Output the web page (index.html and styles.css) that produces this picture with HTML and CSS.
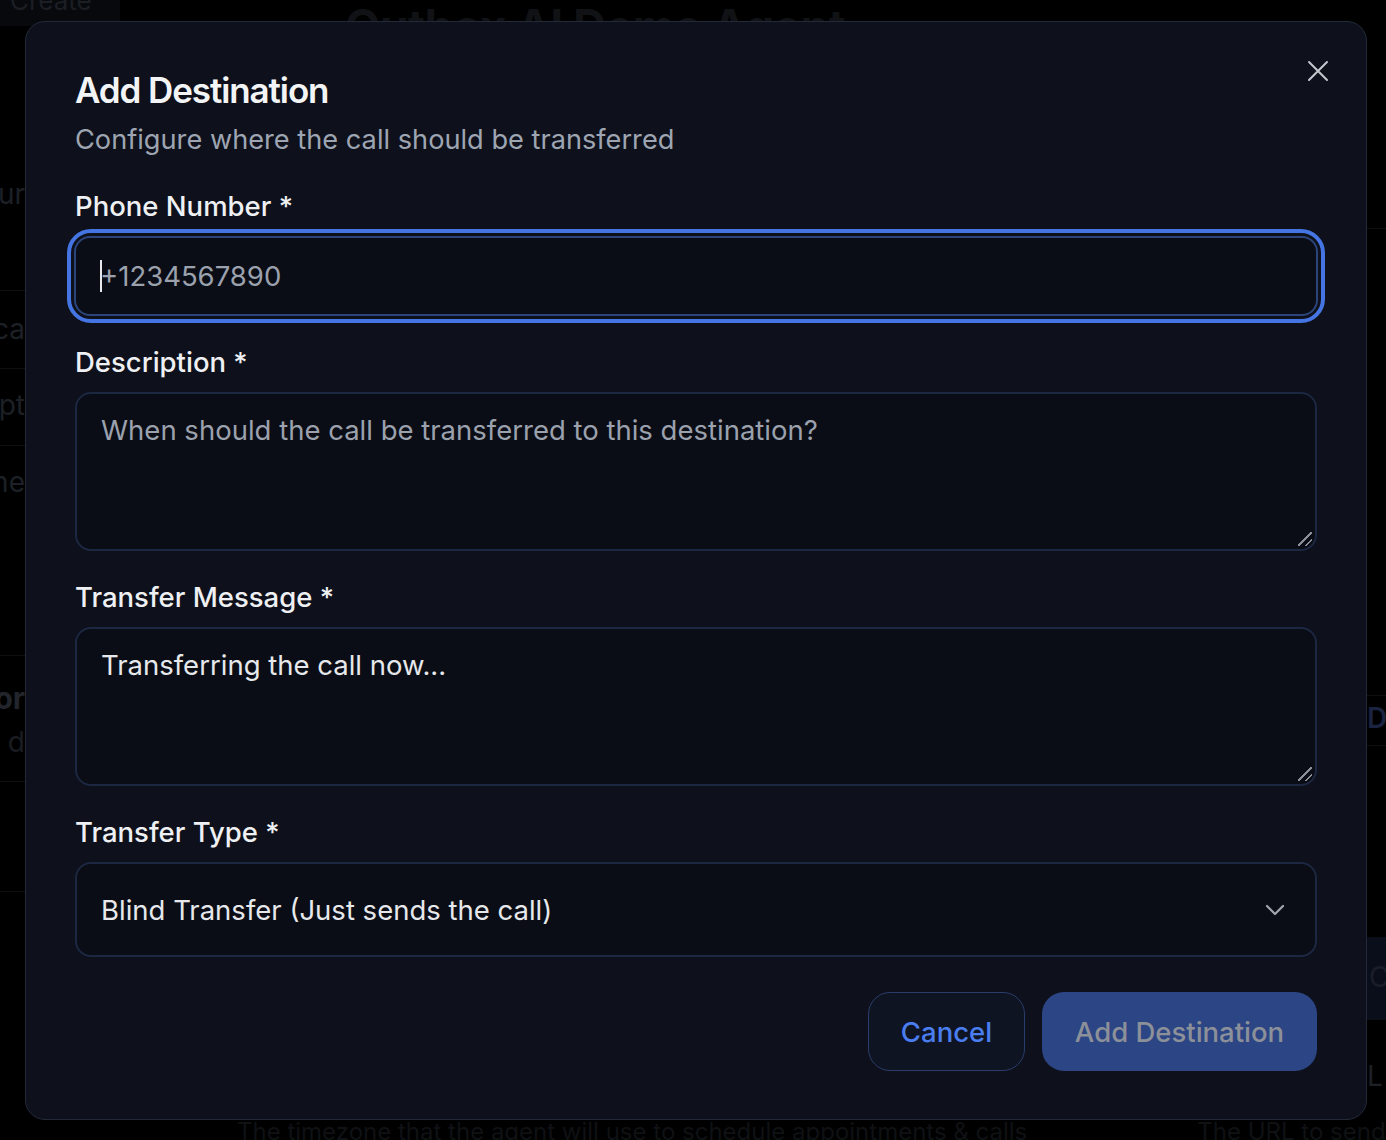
FILE: index.html
```html
<!DOCTYPE html>
<html lang="en">
<head>
<meta charset="utf-8">
<title>Add Destination</title>
<link rel="stylesheet" href="styles.css">
</head>
<body>
<div class="page">
  <header class="page-top">
    <div class="page-create">Create</div>
    <div class="page-title">Outbox AI Demo Agent</div>
  </header>
  <div class="page-body">
    <div class="page-left">
      <div class="frag f1">ur</div>
      <div class="frag f2 line">ca</div>
      <div class="frag f3 line">pt</div>
      <div class="frag f4 line">he</div>
      <div class="frag f5 line">or</div>
      <div class="frag f6">e d</div>
      <div class="frag f7 line"></div>
      <div class="frag f8 line"></div>
    </div>
    <div class="page-mid"></div>
    <div class="page-right">
      <div class="rfrag r1 line"></div>
      <div class="rfrag r2 line">D</div>
      <div class="rfrag r3 line"></div>
      <div class="rfrag r4">Cr</div>
      <div class="rfrag r5 line">L</div>
    </div>
  </div>
  <footer class="page-foot">
    <span class="foot-a">The timezone that the agent will use to schedule appointments &amp; calls</span>
    <span class="foot-b">The URL to send</span>
  </footer>
</div>

<div class="modal" role="dialog">
  <button class="close" aria-label="Close">
    <svg width="22" height="22" viewBox="0 0 22 22"><path d="M2 2 L20 20 M20 2 L2 20" stroke="currentColor" stroke-width="2" stroke-linecap="round" fill="none"/></svg>
  </button>
  <h2 class="title">Add Destination</h2>
  <p class="subtitle">Configure where the call should be transferred</p>

  <div class="field first">
    <label class="label">Phone Number *</label>
    <div class="focus-ring">
      <div class="input"><span class="caret"></span><span class="placeholder">+1234567890</span></div>
    </div>
  </div>

  <div class="field">
    <label class="label">Description *</label>
    <div class="textarea"><span class="placeholder">When should the call be transferred to this destination?</span><span class="grip"></span></div>
  </div>

  <div class="field">
    <label class="label">Transfer Message *</label>
    <div class="textarea"><span class="value">Transferring the call now...</span><span class="grip"></span></div>
  </div>

  <div class="field">
    <label class="label">Transfer Type *</label>
    <div class="select">
      <span class="value">Blind Transfer (Just sends the call)</span>
      <svg class="chev" width="20" height="12" viewBox="0 0 20 12"><path d="M2 2 L10 10 L18 2" stroke="currentColor" stroke-width="2.2" stroke-linecap="round" stroke-linejoin="round" fill="none"/></svg>
    </div>
  </div>

  <div class="actions">
    <button class="btn btn-outline">Cancel</button>
    <button class="btn btn-primary">Add Destination</button>
  </div>
</div>
</body>
</html>
```
FILE: styles.css
```css
* { box-sizing: border-box; }
html, body { margin: 0; padding: 0; }
body {
  width: 1386px;
  height: 1140px;
  overflow: hidden;
  background: #000;
  font-family: Inter, "Noto Sans", "Liberation Sans", sans-serif;
  position: relative;
}

/* dimmed page behind the dialog */
.page {
  display: flex;
  flex-direction: column;
  height: 1140px;
  color: #15171c;
}
.page-top {
  display: flex;
  align-items: flex-start;
  height: 38px;
  overflow: hidden;
}
.page-create {
  width: 120px;
  height: 38px;
  background: #08090c;
  color: #1b1e25;
  font-size: 26px;
  line-height: 1;
  padding-left: 10px;
  margin-top: -12px;
}
.page-title {
  margin-left: 225px;
  font-size: 46px;
  font-weight: 700;
  color: #101216;
  margin-top: -2px;
  letter-spacing: -0.5px;
}
.page-body { flex: 1; display: flex; }
.page-left {
  width: 25px;
  overflow: hidden;
  display: flex;
  flex-direction: column;
}
.page-mid { flex: 1; }
.page-right {
  width: 19px;
  overflow: hidden;
  display: flex;
  flex-direction: column;
}
.frag, .rfrag {
  display: flex;
  white-space: nowrap;
  color: #1d2026;
  font-size: 28px;
  line-height: 36px;
}
.frag { justify-content: flex-end; }
.rfrag { justify-content: flex-start; }
.line { border-top: 1px solid #0e0f12; }
.f1 { padding-top: 138px; height: 252px; }
.f2 { height: 78px; padding-top: 20px; }
.f3 { height: 77px; padding-top: 18px; }
.f4 { height: 210px; padding-top: 18px; }
.f5 { padding-top: 24px; height: 66px; font-weight: 700; font-size: 30px; color: #22252c; }
.f6 { height: 60px; color: #1a1d22; padding-top: 3px; }
.f7 { height: 110px; }
.f8 { height: 100px; }
.r1 { margin-top: 190px; height: 467px; }
.r2 { height: 50px; padding-top: 4px; color: #1a2440; font-weight: 600; }
.r3 { height: 192px; }
.r4 {
  height: 82px;
  background: #0a0e1a;
  color: #1a1e28;
  padding-top: 22px;
  padding-left: 2px;
}
.r5 { height: 100px; padding-top: 38px; }
.page-foot {
  height: 20px;
  display: flex;
  font-size: 24px;
  line-height: 1;
  color: #0f1114;
  overflow: hidden;
}
.foot-a { margin-left: 237px; }
.foot-b { margin-left: 170px; }

/* dialog */
.modal {
  position: absolute;
  left: 25px;
  top: 21px;
  width: 1342px;
  height: 1099px;
  background: #0e111b;
  border: 1.5px solid #222a3a;
  border-radius: 20px;
  padding: 44px 49px 0 49px;
  color: #eef0f3;
}
.close {
  position: absolute;
  right: 37px;
  top: 38px;
  width: 22px;
  height: 22px;
  padding: 0;
  border: 0;
  background: none;
  color: #c3c7ce;
  display: flex;
  align-items: center;
  justify-content: center;
}
.title {
  margin: 0;
  font-size: 35px;
  font-weight: 600;
  letter-spacing: -1.1px;
  line-height: 48px;
  color: #f3f4f6;
}
.subtitle {
  margin: 8px 0 0;
  font-size: 27.2px;
  line-height: 36px;
  color: #9ea5b2;
}
.field { margin-top: 28px; }
.field.first { margin-top: 30px; }
.label {
  display: block;
  font-size: 27.5px;
  font-weight: 500;
  line-height: 36px;
  color: #eef0f3;
  margin-bottom: 12px;
}
.focus-ring {
  margin: -7px -8px;
  padding: 3px;
  border: 4px solid #4575e2;
  border-radius: 24px;
}
.input, .textarea, .select {
  background: #0a0d15;
  border: 2px solid #1c2741;
  border-radius: 16px;
  font-size: 27.5px;
  color: #e6e8ec;
  padding: 0 24px;
}
.input {
  height: 80px;
  display: flex;
  align-items: center;
  border-color: #2b4479;
}
.caret {
  width: 2px;
  height: 32px;
  background: #e6e8ec;
  margin-right: -2px;
}
.placeholder { color: #9ba1ad; }
.textarea {
  position: relative;
  height: 159px;
  padding-top: 18px;
  line-height: 36px;
}
.grip {
  position: absolute;
  right: 3px;
  bottom: 3px;
  width: 14px;
  height: 14px;
  background:
    linear-gradient(135deg, transparent 45%, #8b8f97 45%, #8b8f97 55%, transparent 55%) no-repeat 0 0 / 14px 14px,
    linear-gradient(135deg, transparent 72%, #8b8f97 72%, #8b8f97 82%, transparent 82%) no-repeat 0 0 / 14px 14px;
}
.select {
  height: 95px;
  display: flex;
  align-items: center;
  justify-content: space-between;
  padding-right: 30px;
}
.chev { color: #a2a6ad; }
.actions {
  display: flex;
  justify-content: flex-end;
  gap: 17px;
  margin-top: 35px;
}
.btn {
  height: 79px;
  border-radius: 22px;
  font-family: inherit;
  font-size: 27.5px;
  font-weight: 500;
  padding: 0;
}
.btn-outline {
  width: 157px;
  background: #0f1422;
  border: 1.5px solid #2a3d6c;
  color: #4a7ef0;
}
.btn-primary {
  width: 275px;
  background: #2c4585;
  border: 0;
  color: #8c9099;
}
```
